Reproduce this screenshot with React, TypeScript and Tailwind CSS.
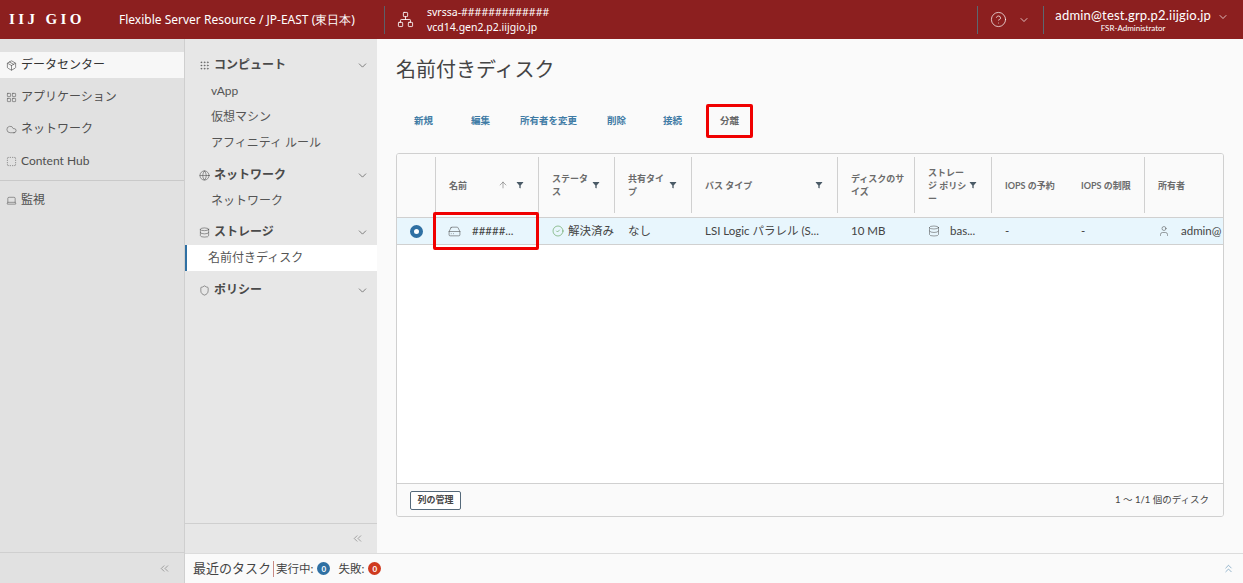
import { ArrowUp, ChevronDown, ChevronsLeft, ChevronsUp, CircleCheck, CircleHelp, Cloud, Database, Filter, HardDrive, Laptop, LayoutGrid, Globe, Network, Shield, User, Grip, SquareDashed, Package } from "lucide-react";
import type { ReactNode } from "react";

const jp = "font-['Lato','Noto_Sans_CJK_JP',sans-serif]";

function MainNav({ icon, label, active }: { icon: ReactNode; label: string; active?: boolean }) {
  return (
    <div className={`flex h-[26px] items-center pl-[6px] text-[12px] text-[#4f4f4f] ${active ? "bg-[#f7f7f7] text-[#333]" : ""}`}>
      <span className="flex w-[15px] shrink-0 items-center">{icon}</span>
      <span className={active ? "" : "ml-[0px]"}>{label}</span>
    </div>
  );
}

function SubHead({ icon, label }: { icon: ReactNode; label: string }) {
  return (
    <div className="flex h-[26px] items-center justify-between pl-[14px] pr-[8px] text-[#4a4a4a]">
      <div className="flex items-center gap-[3px] text-[12px] font-bold">
        <span className="flex w-[12px] items-center">{icon}</span>
        {label}
      </div>
      <ChevronDown size={13} strokeWidth={1.5} className="text-[#666]" />
    </div>
  );
}

function SubItem({ label, active }: { label: string; active?: boolean }) {
  return (
    <div className={`flex h-[26px] items-center text-[12px] text-[#555] ${active ? "border-l-2 border-[#2f70a3] bg-white pl-[21px] text-[#444]" : "pl-[26px]"}`}>
      {label}
    </div>
  );
}

function Head({ children, filter, sort, className = "" }: { children: ReactNode; filter?: boolean; sort?: boolean; className?: string }) {
  return (
    <div className={`flex h-[56px] items-center justify-between border-r border-[#d0d0d0] pl-[13px] pr-[8px] text-[9px] leading-[13px] font-bold text-[#6b6b6b] ${className}`}>
      <span className="min-w-0 flex-1">{children}</span>
      {sort && <ArrowUp size={10} strokeWidth={1.2} className="mr-[8px] text-[#555]" />}
      {filter && <Filter size={8} fill="#4a5a66" strokeWidth={0} className="mr-[6px] shrink-0" />}
    </div>
  );
}

function Cell({ children, className = "" }: { children: ReactNode; className?: string }) {
  return <div className={`flex h-[26px] items-center whitespace-nowrap pl-[13px] text-[11.5px] text-[#444] ${className}`}>{children}</div>;
}

export default function App() {
  return (
    <div className={`flex h-[583px] w-[1243px] flex-col overflow-hidden bg-[#fafafa] ${jp}`}>
      <header className="flex h-[39px] shrink-0 items-center bg-[#8c1f1f] text-white">
        <div className="ml-[9px] w-[100px] font-['Liberation_Serif',serif] text-[15px] font-bold tracking-[3.4px] whitespace-nowrap">IIJ GIO</div>
        <div className="ml-[10px] w-[257px] font-['Noto_Sans',sans-serif] text-[12px] whitespace-nowrap">Flexible Server Resource / JP-EAST (東日本)</div>
        <div className="ml-[8px] h-[28px] w-px bg-[#5c5f68]" />
        <Network size={17} strokeWidth={1.2} className="ml-[12px]" />
        <div className="ml-[13px] font-['Noto_Sans',sans-serif] text-[10.5px] leading-[15px]">
          <div>svrssa-#############</div>
          <div>vcd14.gen2.p2.iijgio.jp</div>
        </div>
        <div className="ml-auto flex h-[28px] items-center border-l border-[#5c6770]">
          <CircleHelp size={17} strokeWidth={1} className="ml-[12px]" />
          <ChevronDown size={12} strokeWidth={1.4} className="ml-[11px]" />
        </div>
        <div className="ml-[13px] flex h-[28px] items-center border-l border-[#5c6770] pl-[11px] pr-[14px]">
          <div className="text-center">
            <div className="text-[13px] leading-[17px] tracking-[0.2px]">admin@test.grp.p2.iijgio.jp</div>
            <div className="text-[8px] leading-[9px]">FSR-Administrator</div>
          </div>
          <ChevronDown size={12} strokeWidth={1.4} className="mb-[5px] ml-[6px]" />
        </div>
      </header>

      <div className="flex min-h-0 flex-1">
        <aside className="flex w-[185px] shrink-0 flex-col border-r border-[#cfcfcf] bg-[#e1e1e1]">
          <div className="flex-1 pt-[13px]">
            <MainNav active label="データセンター" icon={<Package size={11} strokeWidth={1.2} />} />
            <div className="h-[6px]" />
            <MainNav label="アプリケーション" icon={<LayoutGrid size={11} strokeWidth={1.2} />} />
            <div className="h-[6px]" />
            <MainNav label="ネットワーク" icon={<Cloud size={11} strokeWidth={1.2} />} />
            <div className="h-[6px]" />
            <MainNav label="Content Hub" icon={<SquareDashed size={11} strokeWidth={1.2} />} />
            <div className="mt-[6px] border-t border-[#c9c9c9]" />
            <div className="h-[6px]" />
            <MainNav label="監視" icon={<Laptop size={11} strokeWidth={1.2} />} />
          </div>
          <div className="flex h-[31px] items-center justify-end border-t border-[#cfcfcf] pr-[13px]">
            <ChevronsLeft size={13} strokeWidth={1} className="text-[#666]" />
          </div>
        </aside>

        <div className="flex min-w-0 flex-1 flex-col">
          <div className="flex min-h-0 flex-1">
            <nav className="flex w-[192px] shrink-0 flex-col bg-[#e7e7e7]">
              <div className="flex-1 pt-[13px]">
                <SubHead label="コンピュート" icon={<Grip size={11} strokeWidth={1.2} />} />
                <SubItem label="vApp" />
                <SubItem label="仮想マシン" />
                <SubItem label="アフィニティ ルール" />
                <div className="h-[6px]" />
                <SubHead label="ネットワーク" icon={<Globe size={11} strokeWidth={1.2} />} />
                <SubItem label="ネットワーク" />
                <div className="h-[5px]" />
                <SubHead label="ストレージ" icon={<Database size={11} strokeWidth={1.2} />} />
                <SubItem active label="名前付きディスク" />
                <div className="h-[6px]" />
                <SubHead label="ポリシー" icon={<Shield size={11} strokeWidth={1.2} />} />
              </div>
              <div className="flex h-[30px] items-center justify-end border-t border-[#cfcfcf] pr-[13px]">
                <ChevronsLeft size={13} strokeWidth={1} className="text-[#666]" />
              </div>
            </nav>

            <main className="min-w-0 flex-1 px-[19px]">
              <h1 className="mt-[16px] text-[20px] leading-[28px] text-[#444]">名前付きディスク</h1>
              <div className="mt-[21px] flex h-[34px] items-center text-[9.5px] font-bold text-[#3f7ba5]">
                <span className="ml-[18px]">新規</span>
                <span className="ml-[38px]">編集</span>
                <span className="ml-[30px]">所有者を変更</span>
                <span className="ml-[30px]">削除</span>
                <span className="ml-[37px]">接続</span>
                <span className="ml-[24px] flex h-[34px] w-[47px] items-center justify-center rounded-[2px] border-[3px] border-[#f00000] text-[#666]">分離</span>
              </div>
              <div className="mt-[15px] flex h-[364px] w-[828px] flex-col overflow-hidden rounded-[3px] border border-[#d0d0d0] bg-white">
                <div className="grid grid-cols-[39px_103px_76px_77px_146px_77px_77px_76px_77px_80px] items-center border-b border-[#d0d0d0] bg-[#fafafa] pt-[3px] pb-[4px]">
                  <Head>{""}</Head>
                  <Head sort filter>名前</Head>
                  <Head filter>ステータス</Head>
                  <Head filter>共有タイプ</Head>
                  <Head filter>バス タイプ</Head>
                  <Head>ディスクのサイズ</Head>
                  <Head filter>ストレージ ポリシー</Head>
                  <Head className="border-r-0">IOPS の予約</Head>
                  <Head>IOPS の制限</Head>
                  <Head className="border-r-0">所有者</Head>
                </div>
                <div className="grid grid-cols-[39px_103px_76px_77px_146px_77px_77px_76px_77px_80px] border-b border-[#d0d0d0] bg-[#e8f6fd]">
                  <div className="flex h-[26px] items-center justify-center">
                    <span className="h-[13px] w-[13px] rounded-full border-[4px] border-[#2f70a3] bg-white" />
                  </div>
                  <div className="relative flex h-[26px] items-center pl-[12px] text-[11.5px] text-[#444]">
                    <span className="absolute -top-[6px] -bottom-[6px] -left-[3px] right-0 rounded-[2px] border-[3px] border-[#f00000]" />
                    <HardDrive size={13} strokeWidth={1} />
                    <span className="ml-[11px]">#####...</span>
                  </div>
                  <Cell className="pl-[10px]">
                    <CircleCheck size={12} strokeWidth={1} className="mr-[4px] text-[#3c8a2e]" />解決済み
                  </Cell>
                  <Cell>なし</Cell>
                  <Cell>LSI Logic パラレル (S...</Cell>
                  <Cell>10 MB</Cell>
                  <Cell><Database size={12} strokeWidth={1} className="mr-[10px]" />bas...</Cell>
                  <Cell>-</Cell>
                  <Cell>-</Cell>
                  <Cell className="overflow-hidden"><User size={12} strokeWidth={1} className="mr-[11px] shrink-0" />admin@</Cell>
                </div>
                <div className="flex-1" />
                <div className="flex h-[33px] items-center justify-between border-t border-[#d0d0d0] bg-[#fafafa] pl-[13px] pr-[14px]">
                  <span className="flex h-[19px] w-[51px] items-center justify-center rounded-[2px] border border-[#55697a] bg-white text-[9px] font-bold text-[#444]">列の管理</span>
                  <span className="text-[9.5px] text-[#444]">1 ～ 1/1 個のディスク</span>
                </div>
              </div>
            </main>
          </div>
          <footer className="flex h-[30px] shrink-0 items-center border-t border-[#dcdcdc] bg-[#fafafa] pl-[8px] text-[#444]">
            <span className="text-[13px]">最近のタスク</span>
            <span className="mx-[2px] h-[16px] w-px bg-[#c98a85]" />
            <span className="text-[11.5px]">実行中:</span>
            <span className="ml-[4px] flex h-[13px] w-[13px] items-center justify-center rounded-full bg-[#2f70a3] text-[8px] font-bold text-white">0</span>
            <span className="ml-[8px] text-[11.5px]">失敗:</span>
            <span className="ml-[4px] flex h-[13px] w-[13px] items-center justify-center rounded-full bg-[#cf3a1f] text-[8px] font-bold text-white">0</span>
            <ChevronsUp size={13} strokeWidth={1} className="mr-[8px] ml-auto text-[#3f7ba5]" />
          </footer>
        </div>
      </div>
    </div>
  );
}
